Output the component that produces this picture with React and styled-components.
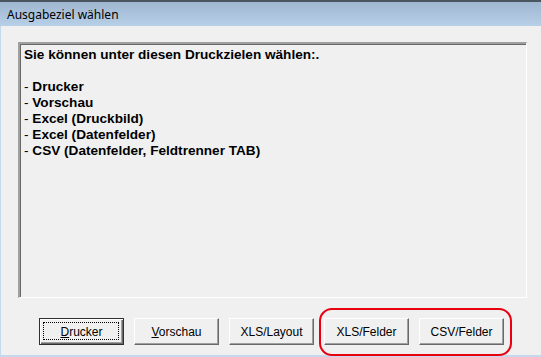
import React from "react";
import styled, { createGlobalStyle } from "styled-components";

const Global = createGlobalStyle`
  html, body { margin: 0; padding: 0; background: #f0f0f0; }
  body { width: 541px; height: 357px; overflow: hidden; }
`;

const Window = styled.div`
  position: relative;
  width: 541px;
  height: 357px;
  box-sizing: border-box;
  background: #f0f0f0;
  display: flex;
  flex-direction: column;
`;

const TitleBar = styled.div`
  height: 26px;
  box-sizing: border-box;
  border-top: 2px solid #4a5560;
  background: linear-gradient(#9fb6d0, #b8cfe8);
  display: flex;
  align-items: center;
  padding-left: 7px;
  font-family: "Noto Sans", "DejaVu Sans", sans-serif;
  font-size: 12px;
  color: #000;
`;

const Body = styled.div`
  flex: 1;
  border-left: 1px solid #c6d8ec;
  border-bottom: 2px solid #c6d8ec;
  padding: 16px 0 0 17px;
  display: flex;
  flex-direction: column;
`;

const Panel = styled.div`
  width: 509px;
  height: 256px;
  box-sizing: border-box;
  border-top: 2px solid #a0a0a0;
  border-left: 2px solid #a0a0a0;
  border-right: 1px solid #ffffff;
  border-bottom: 1px solid #ffffff;
  box-shadow: inset 1px 1px 0 #696969;
  padding: 3px 4px;
  font-family: "Liberation Sans", Arial, sans-serif;
  font-size: 13.6px;
  line-height: 16px;
  color: #000;
`;

const Line = styled.div`
  height: 16px;
  font-weight: ${(p) => (p.$bold ? 700 : 400)};
  white-space: nowrap;
`;

const Dash = styled.span`
  font-weight: 400;
`;

const Strong = styled.span`
  font-weight: 700;
`;

const ButtonRow = styled.div`
  display: flex;
  gap: 10px;
  margin: 20px 0 0 21px;
`;

const Button = styled.div`
  width: 85px;
  height: 27px;
  box-sizing: border-box;
  background: #f0f0f0;
  border-top: 1px solid #ffffff;
  border-left: 1px solid #ffffff;
  border-right: 1px solid #696969;
  border-bottom: 1px solid #696969;
  box-shadow: inset -1px -1px 0 #a0a0a0;
  display: flex;
  align-items: center;
  justify-content: center;
  font-family: "Liberation Sans", Arial, sans-serif;
  font-size: 12px;
  color: #000;
  ${(p) =>
    p.$default &&
    `
    border: 1px solid #303030;
    box-shadow: inset 1px 1px 0 #ffffff, inset -1px -1px 0 #696969, inset -2px -2px 0 #a0a0a0;
    position: relative;
    &::after {
      content: "";
      position: absolute;
      left: 3px; top: 3px; right: 4px; bottom: 4px;
      border: 1px dotted #000;
    }
  `}
`;

const Key = styled.span`
  text-decoration: underline;
`;

const Highlight = styled.div`
  position: absolute;
  left: 319px;
  top: 308px;
  width: 193px;
  height: 48px;
  box-sizing: border-box;
  border: 2px solid #e8000f;
  border-radius: 13px;
  pointer-events: none;
`;

export default function App() {
  const items = [
    "Drucker",
    "Vorschau",
    "Excel (Druckbild)",
    "Excel (Datenfelder)",
    "CSV (Datenfelder, Feldtrenner TAB)",
  ];
  return (
    <>
      <Global />
      <Window>
        <TitleBar>Ausgabeziel wählen</TitleBar>
        <Body>
          <Panel>
            <Line $bold>Sie können unter diesen Druckzielen wählen:.</Line>
            <Line />
            {items.map((t) => (
              <Line key={t}>
                <Dash>- </Dash>
                <Strong>{t}</Strong>
              </Line>
            ))}
          </Panel>
          <ButtonRow>
            <Button $default>
              <span>
                <Key>D</Key>rucker
              </span>
            </Button>
            <Button>
              <span>
                <Key>V</Key>orschau
              </span>
            </Button>
            <Button>XLS/Layout</Button>
            <Button>XLS/Felder</Button>
            <Button>CSV/Felder</Button>
          </ButtonRow>
        </Body>
        <Highlight />
      </Window>
    </>
  );
}
